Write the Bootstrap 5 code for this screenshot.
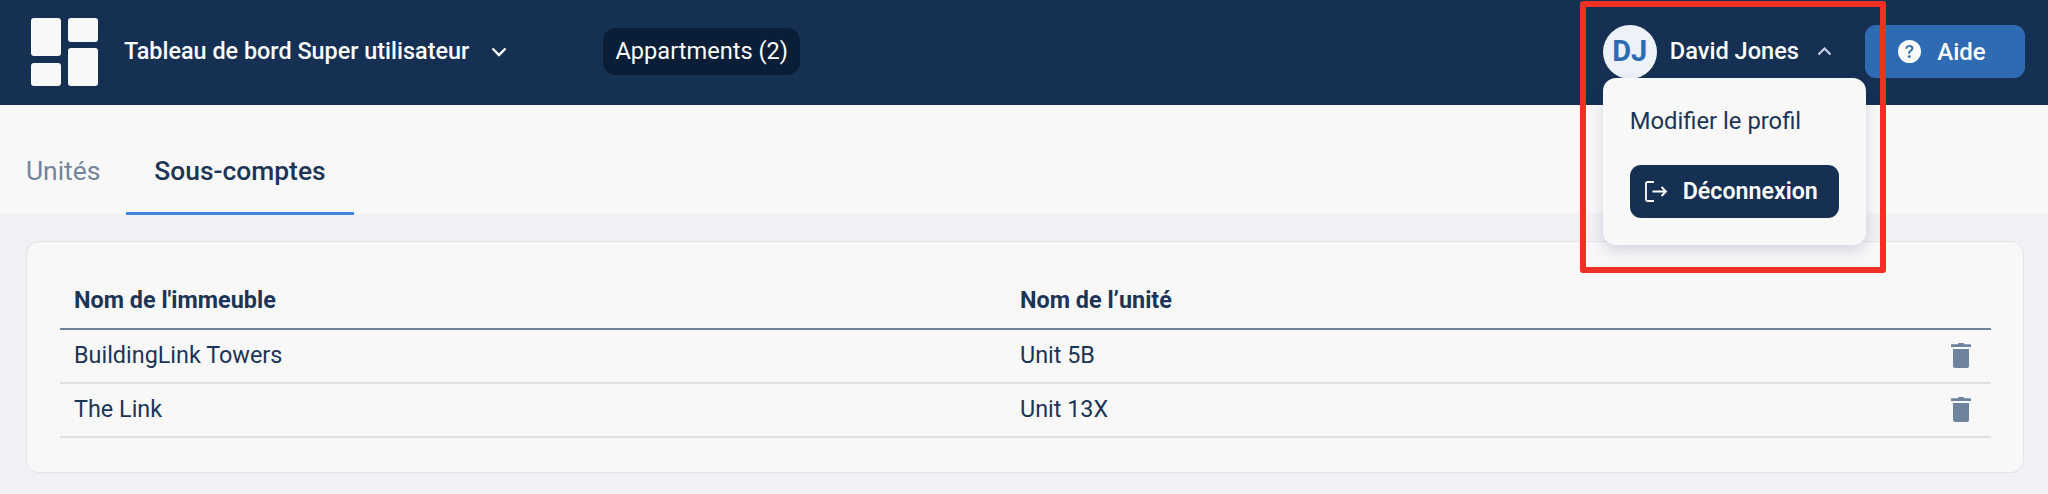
<!DOCTYPE html>
<html lang="fr">
<head>
    <meta charset="utf-8">
    <title>Sous-comptes</title>
    <link href="https://cdn.jsdelivr.net/npm/bootstrap@5.3.2/dist/css/bootstrap.min.css" rel="stylesheet">
    <style>
        html, body { height: 494px; overflow: hidden; }
        body { background: #f0f1f4; font-family: Roboto, "Liberation Sans", sans-serif; font-size: 23.5px; color: #1c3557; position: relative; }
        .top-bar { height: 105px; background: #163054; padding: 0 23px 2px 31px; color: #fff; }
        .brand-logo { width: 67px; height: 68px; display: block; }
        .brand-title { margin-left: 26px; font-weight: 500; font-size: 23.4px; }
        .brand-caret { margin-left: 22px; width: 16px; height: 10px; }
        .units-pill { margin-left: 96px; height: 47px; width: 197px; background: #0b1e38; border-radius: 13px; justify-content: center; font-size: 23.6px; }
        .user-box { position: relative; margin-right: 33px; }
        .user-avatar { width: 54px; height: 54px; border-radius: 50%; background: #edf2f8; color: #2f6bb3; font-weight: 700; font-size: 29px; }
        .user-name { margin-left: 13px; font-weight: 500; font-size: 23.6px; }
        .user-caret { margin-left: 18px; width: 15px; height: 9px; }
        .help-btn { width: 160px; height: 53px; padding: 0 6px 0 0; background: #2f6bb3; border: 0; border-radius: 11px; color: #fff; font-weight: 500; font-size: 24px; gap: 16px; }
        .help-btn:hover { background: #2f6bb3; color: #fff; }
        .user-menu { display: block; left: 0; top: 53px; width: 263px; height: 167px; margin: 0; padding: 0 27px; background: #f8f8f9; border: 0; border-radius: 13px; box-shadow: 0 6px 14px rgba(22, 48, 84, .16); }
        .user-menu .dropdown-item { padding: 25px 0 0; height: 87px; background: none; color: #1c3557; font-size: 23.8px; line-height: 36px; }
        .logout-btn { width: 209px; height: 53px; background: #163054; border: 0; border-radius: 11px; color: #fff; font-weight: 600; font-size: 23.2px; gap: 15px; padding: 0 0 0 15px; }
        .logout-btn:hover { background: #163054; color: #fff; }
        .tabs-band { height: 108px; background: #f8f8f9; padding-left: 26px; }
        .tabs-band .nav-link { height: 110px; padding: 48px 28px 0; margin: 0; border: 0; background: none; color: #73859b; font-size: 26.4px; line-height: 36px; border-radius: 0; }
        .tabs-band .nav-item:first-child .nav-link { padding-left: 0; padding-right: 26px; }
        .tabs-band .nav-link.active { background: none; color: #1c3557; font-weight: 500; border-bottom: 3px solid #3f87d8; }
        .tabs-band.nav-tabs { border: 0; }
        .units-card { margin: 28px 24px 0 26px; height: 232px; background: #f8f8f9; border: 1px solid #e1e4e9; border-radius: 13px; padding: 32px 32px 0 33px; }
        .units-table { --bs-table-bg: transparent; margin: 0; color: #1c3557; font-size: 23.4px; }
        .units-table th, .units-table td { padding: 0 0 0 14px; height: 54px; vertical-align: middle; border-bottom: 2px solid #dde0e5; color: #1c3557; }
        .units-table th { height: 55px; font-weight: 700; font-size: 23.4px; border-bottom-color: #6d839e; }
        .units-table .col-building { width: 946px; }
        .units-table .col-trash { width: 40px; padding: 0 20px 0 0; }
        .trash-icon { display: block; width: 20px; height: 25px; margin: -2px 0 0 auto; }
        .red-frame { position: absolute; left: 1580px; top: 1px; width: 306px; height: 272px; border: 6px solid #ee3124; border-radius: 3px; pointer-events: none; z-index: 2000; }
    </style>
</head>
<body>
    <header class="top-bar d-flex align-items-center">
        <svg class="brand-logo" viewBox="0 0 67 68" fill="#f8f8f9">
            <rect x="0" y="0" width="30" height="38" rx="3"/>
            <rect x="37" y="0" width="30" height="24" rx="3"/>
            <rect x="0" y="45" width="30" height="23" rx="3"/>
            <rect x="37" y="30" width="30" height="38" rx="3"/>
        </svg>
        <span class="brand-title">Tableau de bord Super utilisateur</span>
        <svg class="brand-caret" viewBox="0 0 16 10" fill="none" stroke="#fff" stroke-width="2.4"><path d="M1.5 1.500 8 8l6.500-6.500"/></svg>
        <span class="units-pill d-flex align-items-center">Appartments (2)</span>

        <div class="user-box d-flex align-items-center ms-auto">
            <span class="user-avatar d-flex align-items-center justify-content-center">DJ</span>
            <span class="user-name">David Jones</span>
            <svg class="user-caret" viewBox="0 0 15 9" fill="none" stroke="#c6d0dc" stroke-width="2.2"><path d="M1.5 7.500 7.500 1.500l6 6"/></svg>
            <div class="dropdown-menu user-menu">
                <a class="dropdown-item" href="#">Modifier le profil</a>
                <button class="btn logout-btn d-flex align-items-center" type="button">
                    <svg width="23" height="21" viewBox="0 0 23 21" fill="none" stroke="#fff" stroke-width="1.8"><path d="M9 1H2.500A1.500 1.500 0 0 0 1 2.500v16A1.500 1.500 0 0 0 2.500 20H9"/><path d="M7.500 10.500H21M16.500 6l4.500 4.500-4.500 4.500"/></svg>
                    Déconnexion
                </button>
            </div>
        </div>
        <button class="btn help-btn d-flex align-items-center justify-content-center" type="button">
            <svg width="23" height="23" viewBox="0 0 16 16" fill="#fff"><path d="M16 8A8 8 0 1 1 0 8a8 8 0 0 1 16 0zM5.496 6.033h.825c.138 0 .248-.113.266-.25.09-.656.54-1.134 1.342-1.134.686 0 1.314.343 1.314 1.168 0 .635-.374.927-.965 1.371-.673.489-1.206 1.06-1.168 1.987l.003.217a.25.25 0 0 0 .25.246h.811a.25.25 0 0 0 .25-.25v-.105c0-.718.273-.927 1.01-1.486.609-.463 1.244-.977 1.244-2.056 0-1.511-1.276-2.241-2.673-2.241-1.267 0-2.655.59-2.75 2.286a.237.237 0 0 0 .241.247zm2.325 6.443c.61 0 1.029-.394 1.029-.927 0-.552-.42-.94-1.029-.94-.584 0-1.009.388-1.009.94 0 .533.425.927 1.01.927z"/></svg>
            Aide
        </button>
    </header>

    <ul class="nav nav-tabs tabs-band">
        <li class="nav-item"><a class="nav-link" href="#">Unités</a></li>
        <li class="nav-item"><a class="nav-link active" href="#">Sous-comptes</a></li>
    </ul>

    <main class="units-card">
        <table class="table units-table">
            <thead>
                <tr>
                    <th class="col-building">Nom de l'immeuble</th>
                    <th>Nom de l’unité</th>
                    <th class="col-trash"></th>
                </tr>
            </thead>
            <tbody>
                <tr>
                    <td>BuildingLink Towers</td>
                    <td>Unit 5B</td>
                    <td class="col-trash"><svg class="trash-icon" viewBox="0 0 20 25" fill="#6d839e"><path d="M7 1.200C7 .5 7.500 0 8.200 0h3.600c.7 0 1.200.5 1.200 1.200h6c.6 0 1 .4 1 1V4H0V2.200c0-.6.4-1 1-1h6zM2 6h16v17c0 1.100-.9 2-2 2H4c-1.100 0-2-.9-2-2V6z"/></svg></td>
                </tr>
                <tr>
                    <td>The Link</td>
                    <td>Unit 13X</td>
                    <td class="col-trash"><svg class="trash-icon" viewBox="0 0 20 25" fill="#6d839e"><path d="M7 1.200C7 .5 7.500 0 8.200 0h3.600c.7 0 1.200.5 1.200 1.200h6c.6 0 1 .4 1 1V4H0V2.200c0-.6.4-1 1-1h6zM2 6h16v17c0 1.100-.9 2-2 2H4c-1.100 0-2-.9-2-2V6z"/></svg></td>
                </tr>
            </tbody>
        </table>
    </main>

    <div class="red-frame"></div>

    <script src="https://cdn.jsdelivr.net/npm/bootstrap@5.3.2/dist/js/bootstrap.bundle.min.js"></script>
</body>
</html>
